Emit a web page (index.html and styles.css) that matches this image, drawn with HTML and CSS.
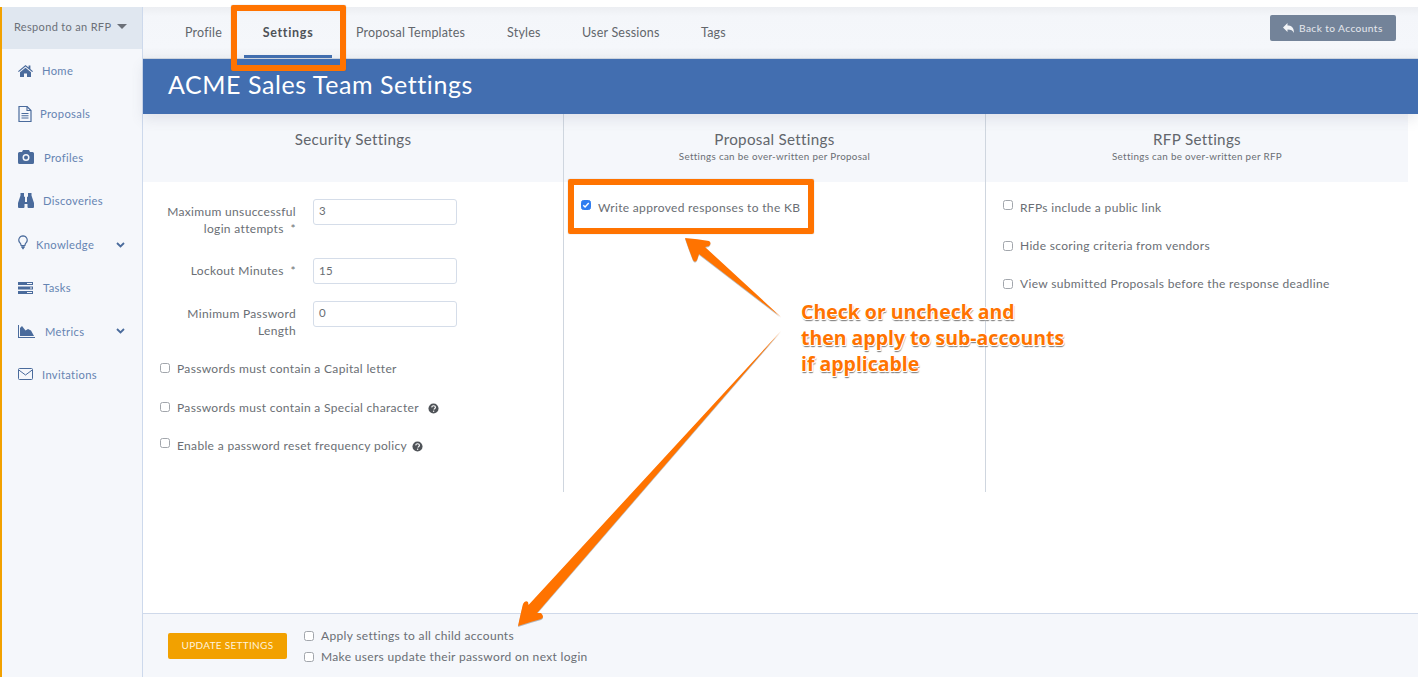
FILE: index.html
```html
<!DOCTYPE html>
<html lang="en">
<head>
<meta charset="utf-8">
<title>ACME Sales Team Settings</title>
<link rel="stylesheet" href="styles.css">
</head>
<body>
<div class="app">
  <aside class="sidebar">
    <div class="switcher"><span>Respond to an RFP</span><i class="caret"></i></div>
    <nav class="nav">
      <a class="nav-item"><svg class="ico" style="width:15px" viewBox="0 0 15 12"><path d="M7.5 0 0 6.2l.8.9L7.5 1.6l6.7 5.5.8-.9-2.6-2.2V.6h-1.8v2L7.5 0zM2 7.2V12h4V8.500h3V12h4V7.200L7.500 2.700z"/></svg><span class="lbl l1">Home</span></a>
      <a class="nav-item"><svg class="ico" style="width:14px;height:16px" viewBox="0 0 14 16"><path d="M1 .5h8l4 4v11H1z" fill="none" stroke="#4a6b9c" stroke-width="1.200"/><path d="M9 .5v4h4M3.500 7.500h7M3.500 9.800h7M3.500 12h7" fill="none" stroke="#4a6b9c" stroke-width="1.100"/></svg><span class="lbl l2">Proposals</span></a>
      <a class="nav-item"><svg class="ico" style="width:16px;height:14px" viewBox="0 0 16 14"><path fill-rule="evenodd" d="M5 0h6l1 2h2.500A1.500 1.500 0 0 1 16 3.500v9a1.500 1.500 0 0 1-1.500 1.500h-13A1.500 1.500 0 0 1 0 12.500v-9A1.500 1.500 0 0 1 1.500 2H4zM8 4a3.500 3.500 0 1 0 0 7 3.500 3.500 0 0 0 0-7zm0 1.500a2 2 0 1 1 0 4 2 2 0 0 1 0-4z"/></svg><span class="lbl l3">Profiles</span></a>
      <a class="nav-item"><svg class="ico" style="width:16px;height:15px" viewBox="0 0 16 15"><path d="M2.500 0h3.500v3.500L7 4v5h2V4l1-.5V0h3.500v2.500L16 10v4a1 1 0 0 1-1 1h-4.500a1 1 0 0 1-1-1v-3h-3v3a1 1 0 0 1-1 1H1a1 1 0 0 1-1-1v-4l2.500-7.500z"/></svg><span class="lbl l4">Discoveries</span></a>
      <a class="nav-item"><svg class="ico bulb" viewBox="0 0 10 15"><path d="M5 .8a4.200 4.200 0 0 0-3 7.100c.7.8 1 1.500 1.100 2.600h3.800c.1-1.100.4-1.800 1.100-2.600A4.200 4.200 0 0 0 5 .8z" fill="none" stroke="#4a6b9c" stroke-width="1.200"/><path d="M3.200 11.200h3.600v1.400l-.8.5-.4 1.200h-1.200L4 13.100l-.8-.5z"/></svg><span class="lbl l5">Knowledge</span><svg class="chev" viewBox="0 0 9 6"><path d="M1 1l3.500 3.500L8 1" fill="none" stroke="#4a6b9c" stroke-width="1.800"/></svg></a>
      <a class="nav-item"><svg class="ico" style="width:15px;height:12px" viewBox="0 0 15 12"><path d="M0 0h15v3H0zM0 4.500h15v3H0zM0 9h15v3H0z"/><path d="M9 1h5v1H9zM12 5.500h2v1h-2zM9 10h5v1H9z" fill="#f5f7fb"/></svg><span class="lbl l6">Tasks</span></a>
      <a class="nav-item"><svg class="ico" style="width:17px;height:13px" viewBox="0 0 17 13"><path d="M0 0h1v12h16v1H0z"/><path d="M2 11V3l2-2 3.500 4.500L10 4l3 1.500L16 11z"/></svg><span class="lbl l7">Metrics</span><svg class="chev" viewBox="0 0 9 6"><path d="M1 1l3.500 3.500L8 1" fill="none" stroke="#4a6b9c" stroke-width="1.800"/></svg></a>
      <a class="nav-item"><svg class="ico" style="width:15px;height:12px" viewBox="0 0 15 12"><path d="M1.500.5h12a1 1 0 0 1 1 1v9a1 1 0 0 1-1 1h-12a1 1 0 0 1-1-1v-9a1 1 0 0 1 1-1zM.8 2l6.700 5 6.700-5" fill="none" stroke="#4a6b9c" stroke-width="1"/></svg><span class="lbl l4">Invitations</span></a>
    </nav>
  </aside>

  <main class="main">
    <header class="tabs">
      <a class="tab t1">Profile</a>
      <a class="tab t2 active">Settings</a>
      <a class="tab t3">Proposal Templates</a>
      <a class="tab t4">Styles</a>
      <a class="tab t5">User Sessions</a>
      <a class="tab t6">Tags</a>
      <a class="back"><svg class="reply" viewBox="0 0 11 10"><path d="M4.500 0v2.500c3.500 0 6.500 1.500 6.500 7.500-1-2.500-3-3.500-6.500-3.500V9L0 4.500z"/></svg>Back to Accounts</a>
    </header>
    <div class="banner"><h1>ACME Sales Team Settings</h1></div>
    <section class="cols">
      <div class="col">
        <div class="col-head"><h2>Security Settings</h2></div>
        <div class="col-body first">
          <div class="field f1"><label>Maximum unsuccessful login attempts &nbsp;*</label><span class="input">3</span></div>
          <div class="field f2"><label>Lockout Minutes &nbsp;*</label><span class="input">15</span></div>
          <div class="field f3"><label>Minimum Password Length</label><span class="input">0</span></div>
          <div class="check c1"><i class="box"></i><span>Passwords must contain a Capital letter</span></div>
          <div class="check c2"><i class="box"></i><span>Passwords must contain a Special character</span><svg class="help" viewBox="0 0 12 12"><circle cx="6" cy="6" r="5.500"/><path d="M4 4.700C4.200 3.500 5 3 6 3c1.200 0 2.100.7 2.100 1.700 0 1.500-1.600 1.400-1.600 2.500" fill="none" stroke="#fff" stroke-width="1.300"/><path d="M5.400 8.300h1.400v1.300H5.400z" fill="#fff"/></svg></div>
          <div class="check c3"><i class="box"></i><span>Enable a password reset frequency policy</span><svg class="help" viewBox="0 0 12 12"><circle cx="6" cy="6" r="5.500"/><path d="M4 4.700C4.200 3.500 5 3 6 3c1.200 0 2.100.7 2.100 1.700 0 1.500-1.600 1.400-1.600 2.500" fill="none" stroke="#fff" stroke-width="1.300"/><path d="M5.400 8.300h1.400v1.300H5.400z" fill="#fff"/></svg></div>
        </div>
      </div>
      <div class="col">
        <div class="col-head"><h2>Proposal Settings</h2><p>Settings can be over-written per Proposal</p></div>
        <div class="col-body">
          <div class="check"><i class="box on"><svg viewBox="0 0 11 11"><path d="M2.500 5.700l2 2 4-4.400" fill="none" stroke="#fff" stroke-width="1.600"/></svg></i><span>Write approved responses to the KB</span></div>
        </div>
      </div>
      <div class="col">
        <div class="col-head"><h2>RFP Settings</h2><p>Settings can be over-written per RFP</p></div>
        <div class="col-body rfp">
          <div class="check"><i class="box"></i><span>RFPs include a public link</span></div>
          <div class="check"><i class="box"></i><span>Hide scoring criteria from vendors</span></div>
          <div class="check"><i class="box"></i><span>View submitted Proposals before the response deadline</span></div>
        </div>
      </div>
    </section>
    <footer class="footer">
      <button class="update">UPDATE SETTINGS</button>
      <div class="foot-checks">
        <div class="fcheck"><i class="box"></i><span>Apply settings to all child accounts</span></div>
        <div class="fcheck"><i class="box"></i><span>Make users update their password on next login</span></div>
      </div>
    </footer>
  </main>
</div>

<div class="mark mark-tab"></div>
<div class="mark mark-kb"></div>
<svg class="arrows" viewBox="0 0 1418 677" width="1418" height="677">
  <path class="arrow" d="M781 317 L699 254 L697 260 Q695 263 693 260 Q689 250 685 238 Q698 239 709 241 Q712 243 709 246 L705 247 Z"/>
  <path class="arrow" d="M781 331 L537 613 L541 613 Q545 617 541 619 Q530 622 518 626 Q521 612 523 604 Q525 600 528 602 L528.500 605 Z"/>
</svg>
<p class="callout">Check or uncheck and<br>then apply to sub-accounts<br>if applicable</p>
</body>
</html>
```
FILE: styles.css
```css
* { box-sizing: border-box; }
html, body { margin: 0; padding: 0; }
body {
  width: 1418px;
  height: 677px;
  overflow: hidden;
  background: #fff;
  position: relative;
  font-family: "Lato", "Open Sans", sans-serif;
  color: #6a6e74;
  letter-spacing: .33px;
}
.app { display: flex; height: 677px; padding-top: 7px; }
.sidebar {
  width: 143px;
  flex: none;
  background: #f5f7fb;
  border-left: 2px solid #f2a100;
  border-right: 1px solid #cdd9ec;
}
.switcher {
  height: 42px;
  background: #e0e7f0;
  display: flex;
  align-items: center;
  padding: 0 0 3px 12px;
  font-size: 11px;
  color: #6b7078;
}
.caret {
  margin-left: 6px;
  border: 5.500px solid transparent;
  border-top: 5px solid #6b7078;
  border-bottom: 0;
  width: 0;
  height: 0;
}
.nav { display: flex; flex-direction: column; }
.nav-item {
  height: 43.400px;
  display: flex;
  align-items: center;
  padding-left: 16px;
  font-size: 11.200px;
  color: #6584b2;
  position: relative;
}
.ico { width: 15px; height: 12px; fill: #4a6b9c; flex: none; }
.bulb { width: 10px; height: 15px; margin-top: -3px; }
.lbl { display: block; }
.l1 { margin-left: 9px; }
.l2 { margin-left: 8px; padding-bottom: 2px; }
.l3 { margin-left: 10px; }
.l4 { margin-left: 9px; }
.l5 { margin-left: 8px; }
.l6 { margin-left: 10px; }
.l7 { margin-left: 10px; }
.chev { position: absolute; left: 114px; top: 19px; width: 9px; height: 6px; }
.main { flex: 1; display: flex; flex-direction: column; min-width: 0; }
.tabs {
  height: 52px;
  flex: none;
  background: linear-gradient(#eceef2, #f4f6fa 9px, #f5f7fb 40px, #eef0f4);
  border-bottom: 1px solid #cfd6df;
  display: flex;
  align-items: flex-start;
  position: relative;
  font-size: 12.500px;
  letter-spacing: .2px;
  color: #62666c;
}
.tab { display: block; padding-top: 18px; height: 51px; }
.t1 { margin-left: 42px; width: 59px; }
.t2 {
  width: 88px;
  margin-right: 24px;
  text-align: center;
  font-weight: 700;
  letter-spacing: .7px;
  color: #4e5258;
  position: relative;
}
.t2::after { content: ""; position: absolute; left: 0; bottom: 0; width: 88px; height: 3px; background: #426eb0; }
.t3 { width: 151px; }
.t4 { width: 75px; }
.t5 { width: 119px; }
.t6 { width: 60px; }
.back {
  position: absolute;
  right: 22px;
  top: 8px;
  width: 126px;
  height: 26px;
  background: #738399;
  border-radius: 2px;
  color: #e6e9ee;
  font-size: 10.200px;
  display: flex;
  align-items: center;
  padding-left: 13px;
  letter-spacing: .4px;
}
.reply { width: 11px; height: 10px; fill: #f2f4f7; margin-right: 5px; }
.banner {
  height: 55px;
  flex: none;
  background: #426eb0;
  padding: 11px 0 0 25px;
  box-shadow: 0 6px 12px rgba(90, 100, 120, .12);
  position: relative;
}
h1 { margin: 0; font-size: 25px; line-height: 28px; font-weight: 400; color: #fff; letter-spacing: .57px; }
.cols { display: flex; flex: none; height: 378px; width: 1265px; }
.col { width: 422px; border-left: 1px solid #cfd6df; display: flex; flex-direction: column; }
.col:first-child { border-left: 0; width: 420px; }
.col:last-child { width: 423px; }
.col-head { height: 68px; flex: none; background: #f5f7fb; text-align: center; padding-top: 15px; }
h2 { margin: 0; font-size: 15.200px; line-height: 21px; font-weight: 400; color: #62666c; letter-spacing: .3px; }
.col-head p { margin: 0; font-size: 9.800px; line-height: 13px; color: #6a6e74; }
.col-body { flex: 1; padding: 18px 0 0 17px; }
.col-body.first { padding-top: 17px; }
.field { display: flex; align-items: flex-start; font-size: 12px; line-height: 17px; }
.field label { width: 136px; text-align: right; padding-top: 4px; flex: none; }
.input {
  width: 144px;
  height: 26px;
  margin-left: 17px;
  border: 1px solid #d5dde9;
  border-radius: 3px;
  padding: 3px 5px;
  background: #fff;
  font-size: 11.500px;
  line-height: 16px;
}
.f2 { margin-top: 21px; }
.f2 .input { padding-top: 4px; }
.f3 { margin-top: 17px; height: 60px; }
.check { display: flex; align-items: flex-start; height: 38px; font-size: 12px; line-height: 16px; }
.box {
  display: block;
  width: 10px;
  height: 10px;
  flex: none;
  border: 1px solid #a2a6ac;
  border-radius: 2.500px;
  background: #fff;
  margin-right: 7px;
}
.c1 { height: 39px; }
.c1 .box, .c2 .box { margin-top: 2px; }
.rfp .check + .check .box { margin-top: 3px; }
.box.on { background: #2f7df0; border-color: #2f7df0; position: relative; }
.box.on svg { position: absolute; left: -1px; top: -1px; width: 10px; height: 10px; }
.help { width: 11px; height: 11px; fill: #4f5358; margin: 3px 0 0 9px; }
.c3 .help { margin-left: 5px; }
.footer {
  height: 64px;
  flex: none;
  margin-top: auto;
  background: #f5f7fb;
  border-top: 1px solid #cfd9ea;
  display: flex;
  align-items: flex-start;
  padding: 19px 0 0 25px;
}
.update {
  width: 119px;
  height: 26px;
  background: #f2a100;
  border: 0;
  border-radius: 2px;
  color: #fff3dc;
  font-family: inherit;
  font-size: 10px;
  letter-spacing: .3px;
  padding: 0 0 2px;
}
.foot-checks { margin: -5px 0 0 17px; display: flex; flex-direction: column; gap: 5px; }
.fcheck { display: flex; align-items: flex-start; height: 16px; font-size: 12px; line-height: 16px; }
.fcheck .box { margin-top: 3px; }
.mark {
  position: absolute;
  border: 6px solid #ff7300;
  border-radius: 2px;
  box-shadow: 0 0 1px rgba(60, 60, 60, .5);
}
.mark-tab { left: 231px; top: 5px; width: 115px; height: 66px; }
.mark-kb { left: 568px; top: 179px; width: 246px; height: 55px; }
.arrows { position: absolute; left: 0; top: 0; pointer-events: none; }
.arrow { fill: #ff7300; filter: drop-shadow(0 1px .6px rgba(60, 60, 60, .35)); }
.callout {
  position: absolute;
  left: 801px;
  top: 299px;
  margin: 0;
  font-family: "Open Sans", sans-serif;
  font-size: 19.500px;
  line-height: 26px;
  font-weight: 700;
  letter-spacing: -.02px;
  color: #ff7300;
  text-shadow: 1px 0 0 #fff, -1px 0 0 #fff, 0 -1px 0 #fff, 0 1px 0 #fff, 1px 1px 0 #fff, -1px 1px 0 #fff, 1px 2px 1px #8a8a8a, 0 2px 1px #8a8a8a;
}
```
